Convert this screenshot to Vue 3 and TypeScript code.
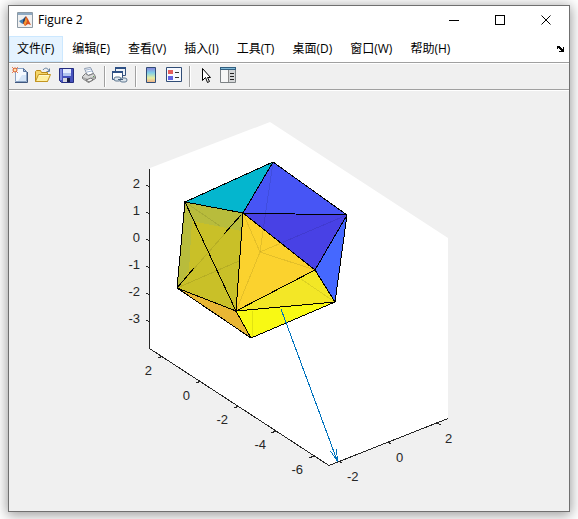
<script setup lang="ts">
import { ref } from 'vue'

interface Label {
  text: string
  x: number
  y: number
}
interface Segment {
  from: [number, number]
  to: [number, number]
}

const menus = ['文件(F)', '编辑(E)', '查看(V)', '插入(I)', '工具(T)', '桌面(D)', '窗口(W)', '帮助(H)']
const activeMenu = ref(0)

const faces = [
  { points: '273,162 185,202 243,213', fill: '#04b6ce' },
  { points: '273,162 243,213 347,215', fill: '#4755f5' },
  { points: '243,213 347,215 315,270', fill: '#4841e5' },
  { points: '347,215 315,270 335,302', fill: '#4568ff' },
  { points: '185,202 243,213 236,311 177,288', fill: '#b8bc3c' },
  { points: '192,221 241,231 236,311 178,288 189,270', fill: '#c9c028' },
  { points: '243,213 236,311 315,270', fill: '#fbd22e' },
  { points: '236,311 315,270 335,302', fill: '#f3e726' },
  { points: '236,311 335,302 251,338', fill: '#f8f914' },
  { points: '177,288 236,311 251,338', fill: '#e9b634' },
]

const hiddenEdges: Segment[] = [
  { from: [260, 252], to: [273, 162] },
  { from: [260, 252], to: [347, 215] },
  { from: [260, 252], to: [243, 213] },
  { from: [260, 252], to: [236, 311] },
  { from: [260, 252], to: [315, 270] },
  { from: [301, 279], to: [335, 302] },
  { from: [185, 202], to: [220, 226] },
  { from: [177, 288], to: [239, 261] },
  { from: [177, 288], to: [243, 213] },
  { from: [253, 311], to: [252, 338] },
]

const edges = [
  'M273 162L185 202L177 288L251 338L335 302L347 215Z',
  'M273 162L243 213L185 202L236 311L177 288',
  'M243 213L347 215L315 270L243 213L236 311L315 270L335 302L236 311L251 338',
  'M241 215L224 234M194 268L177 288',
]

const zTicks = [2, 1, 0, -1, -2, -3].map((value, i) => ({ text: String(value), y: 186 + i * 27 }))
const leftTicks: Segment[] = [
  { from: [158, 358], to: [163, 356] },
  { from: [196, 383], to: [201, 381] },
  { from: [234, 408], to: [239, 406] },
  { from: [271, 433], to: [276, 431] },
  { from: [309, 458], to: [314, 456] },
]
const rightTicks: Segment[] = [
  { from: [339, 461], to: [342, 463] },
  { from: [388, 442], to: [391, 444] },
  { from: [437, 423], to: [441, 425] },
]
const leftLabels: Label[] = [
  { text: '2', x: 152, y: 375 },
  { text: '0', x: 190, y: 400 },
  { text: '-2', x: 228, y: 424 },
  { text: '-4', x: 266, y: 449 },
  { text: '-6', x: 303, y: 474 },
]
const rightLabels: Label[] = [
  { text: '-2', x: 347, y: 481 },
  { text: '0', x: 396, y: 462 },
  { text: '2', x: 445, y: 443 },
]
</script>

<template>
  <div class="desktop">
    <main class="window">
      <header class="titlebar">
        <svg class="icon" viewBox="0 0 16 16" aria-hidden="true">
          <path fill="#e9eef2" stroke="#8d9aa5" d="M.5.5h15v15H.5z" />
          <path fill="#8ea9c2" d="M1 1h14v2H1z" />
          <path fill="#f0f0f0" d="M1 3h14v12H1z" />
          <path fill="#3f7fb5" d="M2 9l4-2 2-2 1 4-3 3-2-1z" />
          <path fill="#263d63" d="M6 8l3-4v6l-3 2z" />
          <path fill="#d9501e" d="M9 4l2 3 3 6-3-1-3 2-2-3 2-2z" />
          <path fill="#f39a35" d="M9 5l1 4-2 5-1-3z" />
        </svg>
        <h1 class="title">Figure 2</h1>
        <div class="controls">
          <button class="control" type="button" aria-label="最小化">
            <svg class="glyph" viewBox="0 0 11 11"><path d="M0 5.500h10" /></svg>
          </button>
          <button class="control" type="button" aria-label="最大化">
            <svg class="glyph" viewBox="0 0 11 11"><path d="M.5.5h9v9h-9z" /></svg>
          </button>
          <button class="control" type="button" aria-label="关闭">
            <svg class="glyph smooth" viewBox="0 0 11 11"><path d="M.5.5l9 9M9.500.5l-9 9" /></svg>
          </button>
        </div>
      </header>

      <nav class="menubar">
        <button
          v-for="(menu, i) in menus"
          :key="menu"
          type="button"
          class="menu"
          :class="{ active: i === activeMenu }"
          @click="activeMenu = i"
        >{{ menu }}</button>
        <button type="button" class="dock" aria-label="停靠">
          <svg viewBox="0 0 7 6" width="7" height="6" shape-rendering="crispEdges">
            <path d="M0 0h3v1h1v1h1v1h1V1h1v5H2V5h2V4H3V3H2V2H1v1H0z" />
          </svg>
        </button>
      </nav>

      <div class="toolbar" role="toolbar">
        <button class="tool" type="button" aria-label="新建">
          <svg class="icon" viewBox="0 0 16 16">
            <path fill="#f4f9ff" stroke="#8aa3c4" d="M3.500 1.500h8l3 3v10h-11z" />
            <path fill="#d5e5f7" d="M10 8h4v6H6z" />
            <path fill="#b9cce6" stroke="#5a759e" d="M11.500 1.500v3h3z" />
            <path stroke="#40577d" d="M3 15.500h12.500V5" fill="none" />
            <path stroke="#e88250" d="M0 0l6 6M6 0L0 6" />
            <circle cx="3" cy="3" r="2" fill="#ffe6a8" stroke="#d9552e" />
          </svg>
        </button>
        <button class="tool" type="button" aria-label="打开">
          <svg class="icon" viewBox="0 0 16 16">
            <path fill="#f5d567" stroke="#ba8a17" d="M.5 14.500v-10l1-1h4l1 2h6v9z" />
            <path fill="#fff0a0" stroke="#c29420" d="M.5 14.500l3-7h12l-3 7z" />
            <path fill="#fff9ce" d="M4 8h10v1H4z" />
            <path fill="none" stroke="#617f9f" d="M8 3c2-3 5-2 6 1M11.500 4.500h3v-3" />
          </svg>
        </button>
        <button class="tool" type="button" aria-label="保存">
          <svg class="icon" viewBox="0 0 16 16">
            <path fill="#4652bd" stroke="#252d80" d="M1.500 1.500h14v14h-12l-2-2z" />
            <path fill="#858ee0" d="M2 2h2v11H2z" />
            <path fill="#e4ecff" d="M5 2h8v7H5z" />
            <path fill="#b2c4ef" d="M5 6h8v3H5z" />
            <path fill="#d6d6df" d="M5 11h7v4H5z" />
            <path fill="#181d48" d="M9 11h3v4H9z" />
          </svg>
        </button>
        <button class="tool" type="button" aria-label="打印">
          <svg class="icon" viewBox="0 0 16 16">
            <path fill="#fff" stroke="#8b98ad" d="M3.500 1.500l6-1 3 6-6 2z" />
            <path stroke="#a5b8d4" d="M5 3l5-1M6 5l5-1" />
            <path fill="#d8d8d8" stroke="#777" d="M1.500 9.500l3-3 3 2 5-2 2 3v2l-7 4-6-4z" />
            <path fill="#aaa" d="M2 10l5 2 7-3v2l-7 4-5-3z" />
            <path fill="#f2f2f2" stroke="#777" d="M5 13l5-2 2 2-4 2z" />
            <path fill="#5ca052" d="M12 9h1v1h-1z" />
          </svg>
        </button>
        <span class="separator"></span>
        <button class="tool" type="button" aria-label="链接绘图">
          <svg class="icon" viewBox="0 0 16 16">
            <path fill="#eef3f8" stroke="#35527e" d="M3.500.5h10v8h-10z" />
            <path fill="#2e5085" d="M3 0h11v2H3z" />
            <path fill="#fff" stroke="#35527e" d="M.5 4.500h10v8H.5z" />
            <path fill="#2e5085" d="M0 4h11v2H0z" />
            <rect x="2" y="10" width="7" height="4" rx="2" fill="#dce5ed" stroke="#617991" />
            <rect x="8" y="11" width="7" height="4" rx="2" fill="#dce5ed" stroke="#617991" />
            <path stroke="#405b78" d="M6 12.500h5" />
          </svg>
        </button>
        <span class="separator"></span>
        <button class="tool" type="button" aria-label="插入颜色栏">
          <svg class="icon" viewBox="0 0 16 16">
            <defs>
              <linearGradient id="colorbar" x2="0" y2="1">
                <stop offset="0" stop-color="#8a80dc" />
                <stop offset=".35" stop-color="#80cfe8" />
                <stop offset=".7" stop-color="#e8efa0" />
                <stop offset="1" stop-color="#eeab87" />
              </linearGradient>
            </defs>
            <path fill="url(#colorbar)" stroke="#304d76" d="M3.500.5h9v15h-9z" />
          </svg>
        </button>
        <button class="tool" type="button" aria-label="插入图例">
          <svg class="icon" viewBox="0 0 16 16">
            <path fill="#f7f9ff" stroke="#304d76" d="M.5.5h15v14H.5z" />
            <path fill="#e45c5c" d="M2 3h5v4H2z" />
            <path fill="#6262e4" d="M2 9h5v4H2z" />
            <path fill="#333" d="M9 5h4v1H9zM9 10h4v1H9z" />
          </svg>
        </button>
        <span class="separator"></span>
        <button class="tool" type="button" aria-label="编辑绘图">
          <svg class="icon" viewBox="0 0 16 16">
            <path fill="#fff" stroke="#000" d="M5.500 1.500v12l3-3 2 5 2-1-2-4h3z" />
          </svg>
        </button>
        <button class="tool" type="button" aria-label="属性检查器">
          <svg class="icon" viewBox="0 0 16 16">
            <path fill="#f7f7f7" stroke="#7d8285" d="M.5.5h15v15H.5z" />
            <path fill="#315f80" d="M0 0h16v3H0z" />
            <path fill="#83bad8" d="M1 1h14v1H1z" />
            <path fill="#d5d7d8" d="M9 3h6v12H9z" />
            <path fill="#8c8c8c" d="M8 3h1v12H8z" />
            <path fill="#222" d="M10 6h4v1h-4zM10 9h4v1h-4zM10 12h4v1h-4z" />
          </svg>
        </button>
      </div>

      <section class="figure">
        <svg class="plot" viewBox="9 91 560 420" role="img">
          <polygon points="150,168 270,122 448,238 448,418 329,465 150,348" fill="#fff" />
          <g shape-rendering="crispEdges">
            <g>
              <polygon v-for="face in faces" :key="face.points" :points="face.points" :fill="face.fill" />
            </g>
            <g class="hidden-edges">
              <line
                v-for="(edge, i) in hiddenEdges"
                :key="i"
                :x1="edge.from[0]"
                :y1="edge.from[1]"
                :x2="edge.to[0]"
                :y2="edge.to[1]"
              />
            </g>
            <path v-for="edge in edges" :key="edge" class="edge" :d="edge" />
            <path class="axis" d="M149.500 169V348.500L329 465.500L448 418.500" />
            <line v-for="tick in zTicks" :key="tick.y" class="axis" x1="146" :y1="tick.y - 1" x2="150" :y2="tick.y + 1" />
            <line
              v-for="(tick, i) in [...leftTicks, ...rightTicks]"
              :key="i"
              class="axis"
              :x1="tick.from[0]"
              :y1="tick.from[1]"
              :x2="tick.to[0]"
              :y2="tick.to[1]"
            />
            <path class="arrow" d="M281 309L337.500 461.500L330.500 451M337.500 461.500L336.500 449" />
          </g>
          <g class="labels end">
            <text v-for="tick in zTicks" :key="tick.text" x="140" :y="tick.y + 2">{{ tick.text }}</text>
            <text v-for="label in leftLabels" :key="label.x" :x="label.x" :y="label.y">{{ label.text }}</text>
          </g>
          <g class="labels">
            <text v-for="label in rightLabels" :key="label.x" :x="label.x" :y="label.y">{{ label.text }}</text>
          </g>
        </svg>
      </section>
    </main>
  </div>
</template>

<style>
body {
  margin: 0;
  background: #fff;
}
</style>

<style scoped>
.desktop {
  box-sizing: border-box;
  display: flex;
  min-height: 100vh;
  padding: 5px 8px 7px;
  overflow: hidden;
  font-family: "Open Sans", "Noto Sans CJK SC", sans-serif;
  font-size: 12px;
  color: #000;
}
.window {
  flex: 1;
  display: flex;
  flex-direction: column;
  min-width: 0;
  border: 1px solid #707070;
  background: #f0f0f0;
  box-shadow: 0 2px 12px 1px rgba(0, 0, 0, 0.4);
}
button {
  margin: 0;
  padding: 0;
  border: 0;
  background: none;
  color: inherit;
  font: inherit;
}
.icon {
  display: block;
  width: 16px;
  height: 16px;
}
.titlebar {
  display: flex;
  align-items: center;
  height: 28px;
  padding: 0 0 2px 8px;
  background: #fff;
}
.title {
  flex: 1;
  margin: 0 0 0 5px;
  font-size: 12px;
  font-weight: 400;
  line-height: 16px;
}
.controls {
  display: flex;
}
.control {
  display: grid;
  place-items: center;
  width: 46px;
  height: 28px;
}
.glyph {
  width: 11px;
  height: 11px;
  fill: none;
  stroke: #000;
  shape-rendering: crispEdges;
}
.glyph.smooth {
  shape-rendering: auto;
}
.menubar {
  display: flex;
  height: 26px;
  border-bottom: 1px solid #a0a0a0;
  background: #fff;
}
.menu {
  box-sizing: border-box;
  padding: 0 8px 0 7px;
  border: 1px solid transparent;
  line-height: 24px;
  white-space: nowrap;
}
.menu + .menu {
  padding: 0 8px;
}
.menu.active {
  border-color: #cce8ff;
  background: #e5f3ff;
}
.dock {
  display: grid;
  place-items: center;
  margin-left: auto;
  padding: 0 5px;
}
.toolbar {
  display: flex;
  height: 25px;
  border-top: 1px solid #fff;
  border-bottom: 1px solid #a0a0a0;
}
.tool {
  display: flex;
  width: 23px;
  padding: 3px;
}
.separator {
  box-sizing: border-box;
  width: 2px;
  margin: 2px 3px;
  border-left: 1px solid #a0a0a0;
  border-right: 1px solid #fff;
}
.figure {
  border-top: 1px solid #fff;
}
.plot {
  display: block;
  width: 100%;
}
.hidden-edges {
  stroke: #000;
  stroke-opacity: 0.09;
}
.edge {
  fill: none;
  stroke: #000;
}
.axis {
  fill: none;
  stroke: #262626;
}
.arrow {
  fill: none;
  stroke: #0072bd;
}
.labels {
  font-family: "Liberation Sans", sans-serif;
  font-size: 13px;
  fill: #262626;
}
.labels.end {
  text-anchor: end;
}
</style>
